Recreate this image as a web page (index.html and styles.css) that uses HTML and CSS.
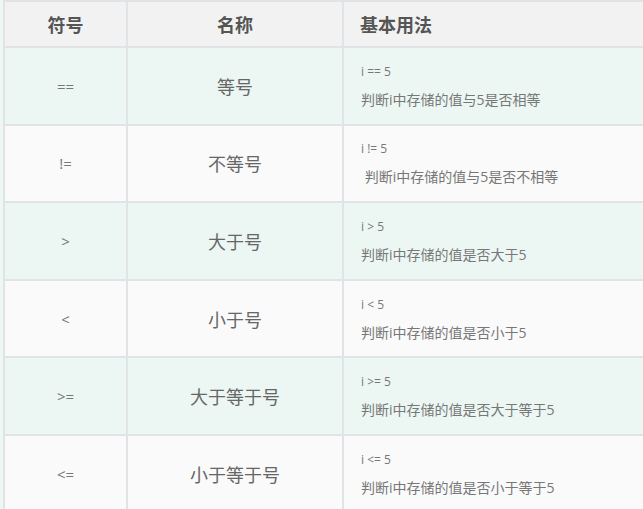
FILE: index.html
```html
<!DOCTYPE html>
<html lang="zh">
<head>
<meta charset="utf-8">
<link rel="stylesheet" href="styles.css">
</head>
<body>
<div class="table">
  <div class="cell head center">符号</div>
  <div class="cell head center">名称</div>
  <div class="cell head left">基本用法</div>

  <div class="cell green sym">==</div>
  <div class="cell green name">等号</div>
  <div class="cell green usage"><p class="code">i == 5</p><p class="desc">判断i中存储的值与5是否相等</p></div>

  <div class="cell white sym">!=</div>
  <div class="cell white name">不等号</div>
  <div class="cell white usage"><p class="code">i != 5</p><p class="desc">&nbsp;判断i中存储的值与5是否不相等</p></div>

  <div class="cell green sym">&gt;</div>
  <div class="cell green name">大于号</div>
  <div class="cell green usage"><p class="code">i &gt; 5</p><p class="desc">判断i中存储的值是否大于5</p></div>

  <div class="cell white sym">&lt;</div>
  <div class="cell white name">小于号</div>
  <div class="cell white usage"><p class="code">i &lt; 5</p><p class="desc">判断i中存储的值是否小于5</p></div>

  <div class="cell green sym">&gt;=</div>
  <div class="cell green name">大于等于号</div>
  <div class="cell green usage"><p class="code">i &gt;= 5</p><p class="desc">判断i中存储的值是否大于等于5</p></div>

  <div class="cell white sym">&lt;=</div>
  <div class="cell white name">小于等于号</div>
  <div class="cell white usage"><p class="code">i &lt;= 5</p><p class="desc">判断i中存储的值是否小于等于5</p></div>
</div>
</body>
</html>
```
FILE: styles.css
```css
html, body {
  margin: 0;
  padding: 0;
  background: #edf8f4;
  font-family: "Open Sans", "Noto Sans CJK SC", sans-serif;
  overflow: hidden;
}

.table {
  margin-left: 3px;
  display: grid;
  grid-template-columns: 121px 214px 1fr;
  grid-template-rows: 44px repeat(6, 75.6px);
  gap: 2px;
  background: #e1e4e7;
  border-top: 2px solid #e1e4e7;
  border-left: 2px solid #e1e4e7;
  width: 638px;
  color: #666;
}

.cell {
  display: flex;
  align-items: center;
  min-width: 0;
}

.head {
  background: #f2f2f2;
  font-weight: bold;
  font-size: 18px;
  color: #555;
}

.center { justify-content: center; }
.left { padding-left: 16px; }

.green { background: #ecf7f3; }
.white { background: #fafafa; }

.sym {
  justify-content: center;
  font-size: 15px;
  color: #777;
}

.name {
  justify-content: center;
  font-size: 18px;
  color: #666;
}

.usage {
  flex-direction: column;
  align-items: flex-start;
  justify-content: center;
  padding-left: 17px;
  gap: 8px;
}

.usage p {
  margin: 0;
  line-height: 20px;
  white-space: pre;
}

.code {
  font-size: 12px;
  color: #777;
}

.desc {
  font-size: 14px;
  color: #777;
}
```
